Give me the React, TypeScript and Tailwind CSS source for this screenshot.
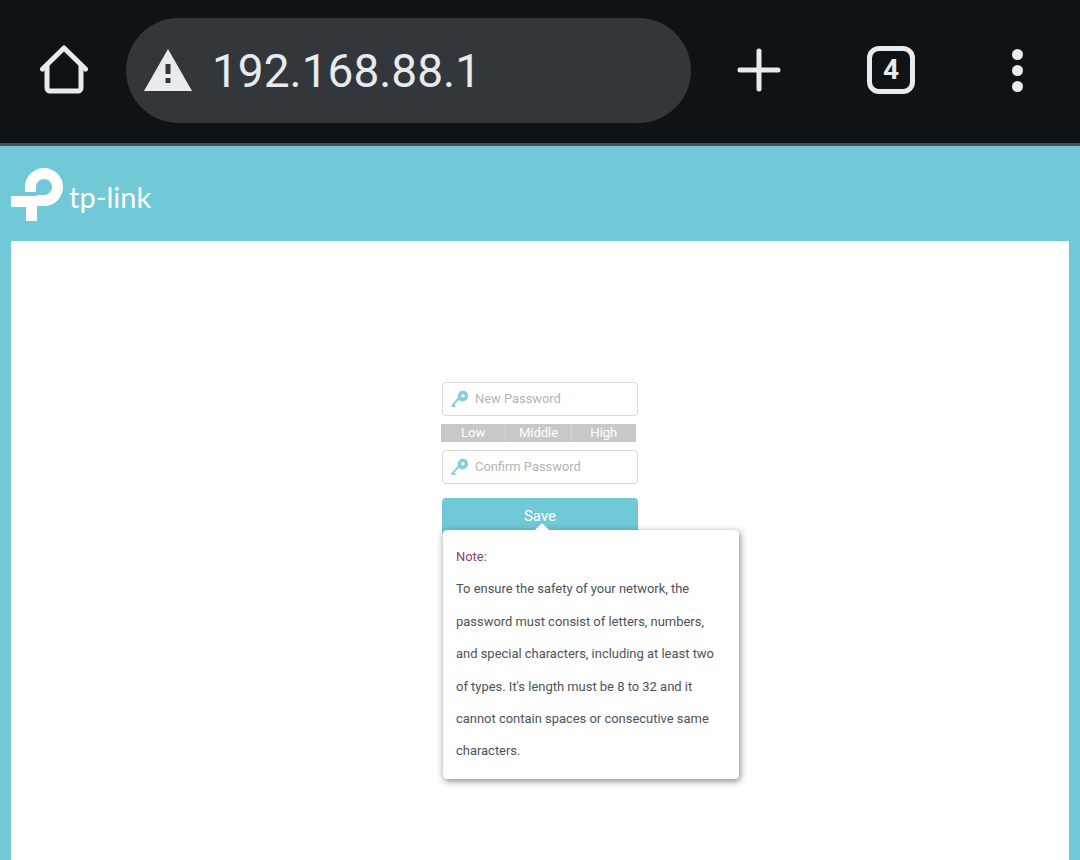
const KeyIcon = () => (
  <svg width="20" height="20" viewBox="0 0 20 20" className="shrink-0">
    <path d="M12.5 1.5a5.5 5.5 0 1 1-3.6 9.6L4.4 15.6l1.4 1.4-1.7 1.7-1.4-1.4-1 1-1-1.3L8 8.6a5.5 5.5 0 0 1 4.5-7.1Z" fill="#86ced9" />
    <circle cx="13" cy="6.8" r="1.7" fill="#fff" />
  </svg>
);

const Field = ({ label }: { label: string }) => (
  <div className="flex h-[34px] w-[196px] items-center rounded-[4px] border border-[#d9d9d9] bg-white pl-[7px]">
    <KeyIcon />
    <span className="ml-[5px] text-[12.9px] text-[#b4b4b4]">{label}</span>
  </div>
);

export default function App() {
  return (
    <div className="flex h-[860px] w-[1080px] flex-col overflow-hidden bg-[#71c8d6] font-['Roboto',sans-serif]">
      <header className="flex h-[146px] shrink-0 items-center border-b-[3px] border-[#4a4f54] bg-[#0e1317] pb-[3px]">
        <svg width="50" height="50" viewBox="0 0 50 50" className="ml-[39px] shrink-0" fill="none" stroke="#e8eaed" strokeWidth="5" strokeLinejoin="round" strokeLinecap="round">
          <path d="M3.5 24 25 3 46.5 24" />
          <path d="M8 20v23a3 3 0 0 0 3 3h28a3 3 0 0 0 3-3V20" />
        </svg>
        <div className="ml-[37px] flex h-[105px] w-[565px] shrink-0 items-center rounded-full bg-[#32373b] pl-[18px]">
          <svg width="48" height="42" viewBox="0 0 48 42" className="shrink-0">
            <path d="M24 0 48 42H0Z" fill="#e8eaed" />
            <rect x="21.5" y="15" width="5" height="10" fill="#32373b" />
            <rect x="21.5" y="29" width="5" height="5" fill="#32373b" />
          </svg>
          <span className="ml-[20px] pt-[1px] text-[46px] leading-none text-[#e8eaed]">192.168.88.1</span>
        </div>
        <svg width="44" height="44" viewBox="0 0 44 44" className="ml-[46px] shrink-0" stroke="#e8eaed" strokeWidth="5" strokeLinecap="round">
          <path d="M22 3v38M3 22h38" />
        </svg>
        <div className="ml-[86px] flex h-[48px] w-[48px] shrink-0 items-center justify-center rounded-[12px] border-[5px] border-[#e8eaed] text-[28px] font-bold text-[#e8eaed]">4</div>
        <div className="ml-[97px] flex shrink-0 flex-col gap-[5px]">
          <span className="h-[11px] w-[11px] rounded-full bg-[#e8eaed]" />
          <span className="h-[11px] w-[11px] rounded-full bg-[#e8eaed]" />
          <span className="h-[11px] w-[11px] rounded-full bg-[#e8eaed]" />
        </div>
      </header>

      <div className="flex h-[95px] shrink-0 items-center pl-[11px]">
        <svg width="53" height="54" viewBox="0 0 53 54" className="mt-[3px] shrink-0" fill="none" stroke="#fff" strokeWidth="11">
          <path d="M0 33.5H20.5V53" />
          <path d="M19.5 24V19A13.5 13.5 0 1 1 33 32.5H26" />
        </svg>
        <span className="ml-[5px] mt-[6px] font-['Lato',sans-serif] text-[29px] font-normal leading-none text-white">tp-link</span>
      </div>

      <main className="mx-[11px] flex flex-1 flex-col items-center bg-white pt-[141px]">
        <div className="relative flex w-[196px] flex-col">
          <Field label="New Password" />
          <div className="mt-[8px] ml-[-1px] flex h-[18px] w-[195px] bg-[#c8c8c8] text-[13px] leading-[18px] text-white">
            <span className="flex-1 border-r border-[#d4d4d4] text-center">Low</span>
            <span className="flex-1 border-r border-[#d4d4d4] text-center">Middle</span>
            <span className="flex-1 text-center">High</span>
          </div>
          <div className="mt-[8px]"><Field label="Confirm Password" /></div>
          <button className="mt-[14px] h-[36px] rounded-t-[4px] bg-[#71c8d6] text-[15px] text-white">Save</button>

          <div className="absolute left-[1px] top-[148px] h-[249px] w-[296px] rounded-[4px] bg-white pt-[12px] pl-[13px] text-[12.95px] leading-[32.4px] text-[#4d5257] shadow-[1px_2px_7px_rgba(0,0,0,0.5)]">
            <div className="absolute left-[94px] top-[-5px] h-[10px] w-[10px] rotate-45 bg-white" />
            <div className="mt-[-1px] text-[#93407a]">Note:</div>
            <div>To ensure the safety of your network, the</div>
            <div>password must consist of letters, numbers,</div>
            <div>and special characters, including at least two</div>
            <div>of types. It's length must be 8 to 32 and it</div>
            <div>cannot contain spaces or consecutive same</div>
            <div>characters.</div>
          </div>
        </div>
      </main>
    </div>
  );
}
